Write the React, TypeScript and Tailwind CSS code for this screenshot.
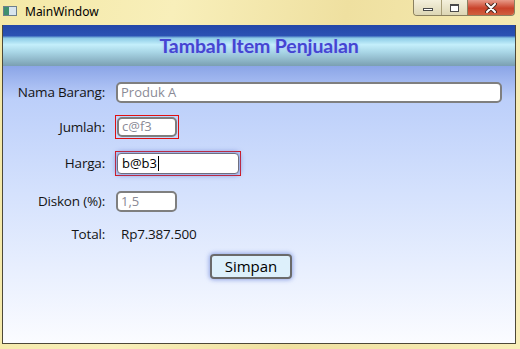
import React from "react";

const labelFont = { fontFamily: '"Open Sans", "Noto Sans", sans-serif' };

const Row = (props: { label: string; h: string; mt: string; children: React.ReactNode }) => {
  return (
    <div className={`flex items-center ${props.h} ${props.mt}`}>
      <div className="w-[102px] text-right text-[13.5px] text-[#141414] tracking-[-0.2px]">{props.label}</div>
      <div className="ml-[10px] flex items-center">{props.children}</div>
    </div>
  );
};

const App = () => {
  return (
    <div
      className="w-[520px] h-[349px] flex flex-col bg-[linear-gradient(100deg,#f4e8a6_0%,#f8efba_30%,#efe0a0_60%,#f8eeb8_100%)] overflow-hidden"
      style={labelFont}
    >
      {/* title bar */}
      <div className="h-[25px] flex items-start relative">
        <div className="mt-[6px] ml-[3px] w-[14px] h-[10px] border border-[#6d7f8c] bg-[linear-gradient(90deg,#3f8f6e_0%,#3f8f6e_45%,#d8e4ee_45%)]"></div>
        <div className="ml-[8px] mt-[3px] text-[12px] text-black" style={{ fontFamily: '"Noto Sans", sans-serif' }}>
          MainWindow
        </div>
        <div className="ml-auto mr-[5px] flex h-[16px] rounded-b-[4px] border border-t-0 border-[#8a8060] overflow-hidden">
          <div className="w-[28px] flex items-center justify-center bg-[linear-gradient(#f4f0dc,#ddd6b4)] border-r border-[#a89e78]">
            <div className="w-[10px] h-[3px] border border-[#4a4a4a] bg-white mt-[3px]"></div>
          </div>
          <div className="w-[26px] flex items-center justify-center bg-[linear-gradient(#f4f0dc,#ddd6b4)] border-r border-[#8a8060]">
            <div className="w-[9px] h-[8px] border border-[#4a4a4a] border-t-2 bg-white"></div>
          </div>
          <div className="w-[46px] flex items-center justify-center bg-[linear-gradient(#e89a88,#c9422a_55%,#d0603e)]">
            <svg width="12" height="10" viewBox="0 0 12 10">
              <path d="M2 1 L10 9 M10 1 L2 9" stroke="#4a2a20" strokeWidth="4" strokeLinecap="round" />
              <path d="M2 1 L10 9 M10 1 L2 9" stroke="#ffffff" strokeWidth="2" strokeLinecap="round" />
            </svg>
          </div>
        </div>
      </div>

      {/* client area */}
      <div className="ml-[2px] mr-[4px] h-[319px] flex flex-col border-l border-r border-b border-[#4d4838]">
        <div
          className="h-[41px] flex items-center justify-center bg-[linear-gradient(180deg,#2447a8_0%,#2b52b3_26%,#8ccbe6_32%,#c4effb_48%,#a9d6e6_66%,#7a9fb2_100%)]"
        >
          <div
            className="text-[19.5px] font-bold text-[#4545d2] tracking-[-0.1px]"
            style={{ fontFamily: 'Lato, "Open Sans", sans-serif', textShadow: "0 0 3px rgba(160,170,255,0.7)" }}
          >
            Tambah Item Penjualan
          </div>
        </div>

        <div className="flex-1 flex flex-col bg-[linear-gradient(180deg,#8ba5e7_0%,#bccffa_12%,#d4e1fd_45%,#fbfcff_100%)]">
          <Row label="Nama Barang:" h="h-[21px]" mt="mt-[16px]">
            <div className="ml-[1px] w-[386px] h-[21px] border-2 border-[#7f7f7f] rounded-[5px] bg-white flex items-center px-[3px] text-[13px] text-[#8a8a96]">
              Produk A
            </div>
          </Row>
          <Row label="Jumlah:" h="h-[24px]" mt="mt-[12px]">
            <div className="border border-[#e01010] p-[1px]">
              <div className="w-[60px] h-[20px] border-2 border-[#7f7f7f] rounded-[5px] bg-white flex items-center px-[3px] text-[13px] text-[#8a8a96]">
                c@f3
              </div>
            </div>
          </Row>
          <Row label="Harga:" h="h-[25px]" mt="mt-[12px]">
            <div className="border border-[#e01010] p-[1px]">
              <div className="w-[122px] h-[21px] border border-[#6f6f7f] rounded-[4px] bg-white flex items-center px-[4px] text-[13px] text-black shadow-[0_0_4px_2px_rgba(90,110,200,0.5)]">
                b@b3<span className="ml-[1px] w-[1px] h-[15px] bg-black"></span>
              </div>
            </div>
          </Row>
          <Row label="Diskon (%):" h="h-[21px]" mt="mt-[15px]">
            <div className="ml-[1px] w-[61px] h-[21px] border-2 border-[#7f7f7f] rounded-[5px] bg-white flex items-center px-[3px] text-[13px] text-[#8a8a96]">
              1,5
            </div>
          </Row>
          <Row label="Total:" h="h-[18px]" mt="mt-[13px]">
            <div className="ml-[6px] text-[13.5px] text-[#141414] tracking-[-0.2px]">Rp7.387.500</div>
          </Row>
          <div className="mt-[11px] ml-[207px] w-[82px] h-[25px] border-2 border-[#6a6a6a] rounded-[4px] bg-[#ddf0fb] flex items-center justify-center text-[15px] text-black shadow-[0_0_4px_1px_rgba(80,110,210,0.55)]">
            Simpan
          </div>
        </div>
      </div>
    </div>
  );
};

export default App;
